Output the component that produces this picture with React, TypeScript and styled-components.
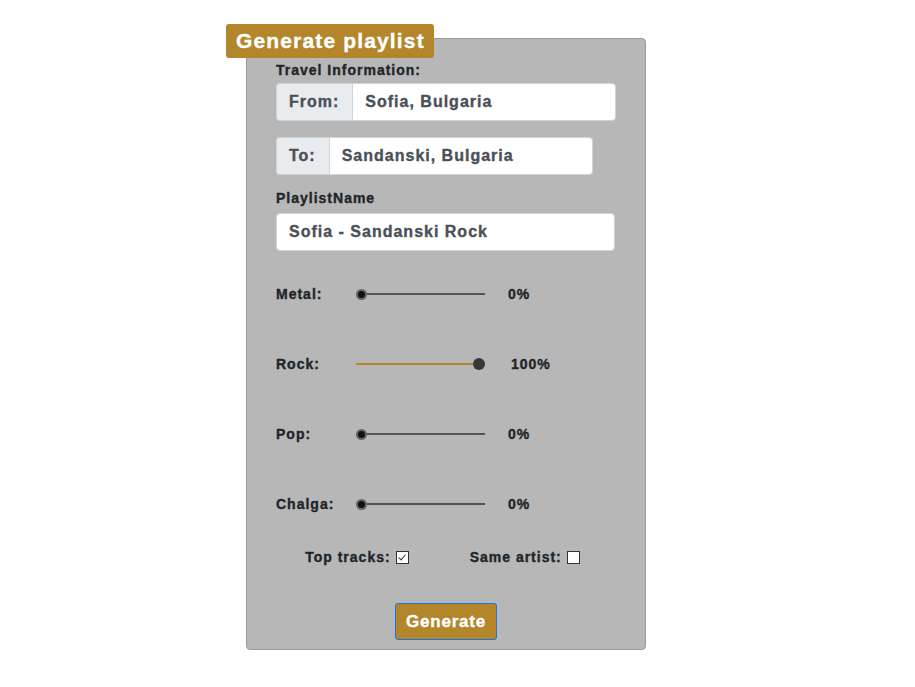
import React from 'react';
import styled, { createGlobalStyle } from 'styled-components';

const GlobalStyle = createGlobalStyle`
  body {
    margin: 0;
    background: #ffffff;
    font-family: "Liberation Sans", Arial, sans-serif;
  }
`;

const Page = styled.div`
  padding: 24px 0 0 226px;
  letter-spacing: 1px;
  -webkit-text-stroke: 0.35px currentColor;
`;

const Badge = styled.div`
  position: relative;
  z-index: 1;
  display: inline-block;
  background: #b3862c;
  color: #ffffff;
  font-weight: 700;
  font-size: 21px;
  line-height: 34px;
  letter-spacing: 1.15px;
  padding: 0 9px 0 10px;
  border-radius: 3px;
`;

const Panel = styled.div`
  width: 400px;
  box-sizing: border-box;
  margin: -20px 0 0 20px;
  background: #b7b7b7;
  border: 1px solid #9a9a9a;
  border-radius: 4px;
  padding: 23px 29px 9px;
  color: #212529;
`;

const Label = styled.div<{ $top?: number }>`
  font-size: 14px;
  font-weight: 700;
  line-height: 16px;
  margin-top: ${p => p.$top ?? 0}px;
`;

const Group = styled.div<{ $top?: number }>`
  display: flex;
  height: 38px;
  margin-top: ${p => p.$top ?? 0}px;
`;

const Addon = styled.span`
  display: flex;
  align-items: center;
  padding: 0 13px 0 12px;
  background: #e9ecef;
  border: 1px solid #ced4da;
  border-right: none;
  border-radius: 4px 0 0 4px;
  color: #495057;
  font-size: 16px;
  font-weight: 700;
  letter-spacing: 1px;
`;

const Field = styled.input<{ $w: number; $joined?: boolean }>`
  width: ${p => p.$w}px;
  box-sizing: border-box;
  height: 38px;
  padding: 0 12px;
  border: 1px solid #ced4da;
  border-radius: ${p => (p.$joined ? '0 4px 4px 0' : '4px')};
  background: #ffffff;
  color: #495057;
  font-family: inherit;
  font-size: 16px;
  font-weight: 700;
  letter-spacing: 1px;
  -webkit-text-stroke: 0.35px #495057;
  outline: none;
`;

const Genres = styled.div`
  display: flex;
  flex-direction: column;
  gap: 50px;
  margin-top: 33px;
`;

const GenreRow = styled.div`
  display: grid;
  grid-template-columns: 80px 129px auto;
  align-items: center;
  height: 20px;
  font-size: 14px;
  font-weight: 700;
`;

const Value = styled.span<{ $wide?: boolean }>`
  margin-left: ${p => (p.$wide ? 26 : 23)}px;
`;

const Range = styled.input<{ $pct: number; $active?: boolean }>`
  -webkit-appearance: none;
  appearance: none;
  width: 129px;
  height: 12px;
  margin: 0;
  background: transparent;

  &::-webkit-slider-runnable-track {
    height: 2px;
    background: ${p =>
      `linear-gradient(to right, #b3862c 0%, #b3862c ${p.$pct}%, #555555 ${p.$pct}%, #555555 100%)`};
  }

  &::-webkit-slider-thumb {
    -webkit-appearance: none;
    width: ${p => (p.$active ? 12 : 11)}px;
    height: ${p => (p.$active ? 12 : 11)}px;
    margin-top: ${p => (p.$active ? -5 : -4.5)}px;
    border-radius: 50%;
    box-sizing: border-box;
    background: ${p => (p.$active ? '#3a373a' : '#111111')};
    border: ${p => (p.$active ? 'none' : '2px solid #666666')};
  }
`;

const Checks = styled.div`
  display: flex;
  justify-content: center;
  gap: 61px;
  margin-top: 35px;
  padding-right: 7px;
  font-size: 14px;
  font-weight: 700;
`;

const Check = styled.label`
  display: flex;
  align-items: center;
  gap: 5px;
`;

const Box = styled.input`
  -webkit-appearance: none;
  appearance: none;
  position: relative;
  margin: 0;
  width: 13px;
  height: 13px;
  box-sizing: border-box;
  background: #ffffff;
  border: 1px solid #333333;

  &:checked::after {
    content: '';
    position: absolute;
    left: 3.5px;
    top: 1px;
    width: 3px;
    height: 6px;
    border: solid #333333;
    border-width: 0 1.3px 1.3px 0;
    transform: rotate(40deg);
  }
`;

const Footer = styled.div`
  display: flex;
  justify-content: center;
  margin-top: 38px;
`;

const Button = styled.button`
  background: #b3862c;
  color: #ffffff;
  border: 1px solid #1a73e8;
  border-radius: 3px;
  padding: 0 10px;
  height: 37px;
  font-family: inherit;
  font-size: 17px;
  font-weight: 700;
  letter-spacing: 0.8px;
  -webkit-text-stroke: 0.35px #ffffff;
`;

const genres = [
  { name: 'Metal', value: 0 },
  { name: 'Rock', value: 100 },
  { name: 'Pop', value: 0 },
  { name: 'Chalga', value: 0 },
];

const App: React.FC = () => {
  return (
    <Page>
      <GlobalStyle />
      <Badge>Generate playlist</Badge>
      <Panel>
        <Label>Travel Information:</Label>
        <Group $top={5}>
          <Addon>From:</Addon>
          <Field $w={264} $joined defaultValue="Sofia, Bulgaria" />
        </Group>
        <Group $top={16}>
          <Addon>To:</Addon>
          <Field $w={264} $joined defaultValue="Sandanski, Bulgaria" />
        </Group>
        <Label $top={15}>PlaylistName</Label>
        <Group $top={7}>
          <Field $w={339} defaultValue="Sofia - Sandanski Rock" />
        </Group>
        <Genres>
          {genres.map(g => (
            <GenreRow key={g.name}>
              <span>{g.name}:</span>
              <Range
                type="range"
                min={0}
                max={100}
                defaultValue={g.value}
                $pct={g.value}
                $active={g.value > 0}
              />
              <Value $wide={g.value > 0}>{g.value}%</Value>
            </GenreRow>
          ))}
        </Genres>
        <Checks>
          <Check>
            Top tracks: <Box type="checkbox" defaultChecked />
          </Check>
          <Check>
            Same artist: <Box type="checkbox" />
          </Check>
        </Checks>
        <Footer>
          <Button>Generate</Button>
        </Footer>
      </Panel>
    </Page>
  );
};

export default App;
